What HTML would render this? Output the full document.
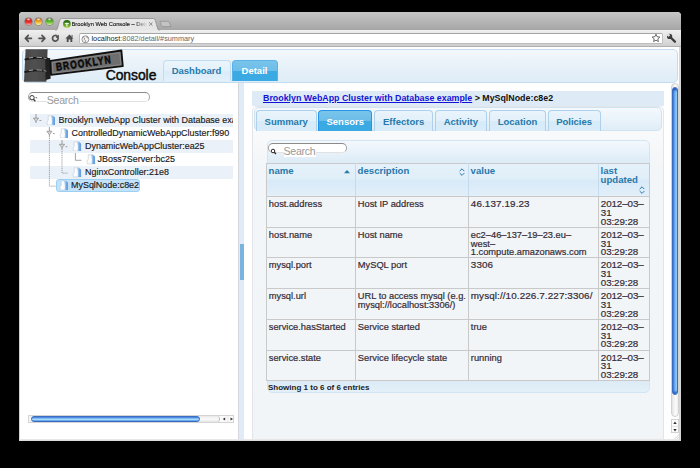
<!DOCTYPE html>
<html><head><meta charset="utf-8">
<style>
*{margin:0;padding:0;box-sizing:border-box}
html,body{width:700px;height:468px;overflow:hidden;background:#000;font-family:"Liberation Sans",sans-serif;position:relative}
.a{position:absolute}
.light{width:7px;height:7px;border-radius:50%;top:17.8px;box-shadow:0 0 0 0.5px rgba(60,20,10,0.45)}
/* header */
.tabd{border:1px solid #aed0ea;border-bottom:0;border-radius:4px 4px 0 0;background:linear-gradient(#e9f4fb 0%,#e3f0fa 50%,#d7ebf9 50%,#d7ebf9 100%);color:#2779aa;font-weight:bold;text-align:center}
.taba{border:1px solid #2694e8;border-bottom:0;border-radius:4px 4px 0 0;background:linear-gradient(#79c4ea 0%,#6bbde8 50%,#3baae3 50%,#3baae3 100%);color:#fff;font-weight:bold;text-align:center}
.tree div{position:absolute;height:13.1px;font-size:8.95px;line-height:13.1px;color:#1a1a1a;white-space:nowrap;-webkit-text-stroke:0.15px #1a1a1a}

.dt{border-collapse:collapse;table-layout:fixed;font-size:9.3px;color:#362b36;-webkit-text-stroke:0.2px #362b36}
.dt span.n{font-size:9.9px;letter-spacing:0.1px;position:relative;top:-0.2px}
.dt td.n{letter-spacing:-0.1px;font-size:9.8px}
.dt td{border:1px solid #c9c9c9;background:#f1f5f8;vertical-align:top;padding:3px 2px 0 1.8px;height:30.7px;line-height:8.8px;white-space:nowrap;overflow:hidden}
.dt th{border:1px solid #c9c9c9;border-top:1px solid #c9c9c9;background:linear-gradient(#e5f1fa 0,#e0eef9 16.5px,#d7e9f7 16.5px,#e2effa 100%);vertical-align:top;text-align:left;padding:3.4px 2px 0 1.6px;height:33.3px;font-size:9.6px;line-height:8.5px;color:#2779aa;font-weight:bold;position:relative;-webkit-text-stroke:0;border-left-color:#c5dcee;border-right-color:#c5dcee}
.dt i{position:absolute;right:4px;top:5px;width:6px;height:8px}
.dt i.up{border-left:2.9px solid transparent;border-right:2.9px solid transparent;border-bottom:3.2px solid #2779aa;width:0;height:0;top:6.2px;right:5px}
.dt th:first-child{border-left-color:#c9c9c9}
.dt th:last-child{border-right-color:#c9c9c9}
.dt svg.up{position:absolute;right:3.8px;top:5px}
.dt svg.ud{position:absolute;right:3.2px;top:3.9px}
.dt svg.ud.b{top:22.5px;right:4.5px}
</style></head><body>
<!-- window frame -->
<div class="a" style="left:19px;top:12px;width:661.6px;height:428px;background:#fff;border-radius:4px 4px 0 0;overflow:hidden">
  <div class="a" style="left:0;top:0;width:662px;height:18px;background:linear-gradient(#c6c6c6,#a6a6a6)"></div>
  <div class="a" style="left:0;top:17.5px;width:662px;height:17.5px;background:linear-gradient(#efefef,#dedede 60%,#cfcfcf);border-bottom:1px solid #b0b0b0"></div>
</div>
<!-- traffic lights -->
<div class="a light" style="left:25.1px;background:radial-gradient(ellipse 35% 22% at 50% 18%,rgba(255,255,255,0.95),rgba(255,255,255,0) 100%),linear-gradient(#8e140e,#dc2018 35%,#ee3a36 65%,#ffaaa4)"></div>
<div class="a light" style="left:35.3px;background:radial-gradient(ellipse 35% 22% at 50% 18%,rgba(255,255,255,0.95),rgba(255,255,255,0) 100%),linear-gradient(#8a4a08,#e08a18 35%,#f4c040 65%,#fff0a0)"></div>
<div class="a light" style="left:45.8px;background:radial-gradient(ellipse 35% 22% at 50% 18%,rgba(255,255,255,0.95),rgba(255,255,255,0) 100%),linear-gradient(#1e5a0c,#4aa020 35%,#78c83e 65%,#c8f0a0)"></div>
<!-- chrome tab -->
<svg class="a" style="left:50px;top:17px" width="130" height="14" viewBox="0 0 130 14">
  <path d="M5.5 13.5 C8.5 13.5 8.5 1.5 11.5 1.5 L103.5 1.5 C106.5 1.5 106.5 13.5 109.5 13.5" fill="#e6e6e6" stroke="#8a8a8a" stroke-width="0.8"/>
  <path d="M109.8 4.3 L118.4 4.3 C119.4 4.3 120.6 9.6 121 9.6 L112.4 9.6 C111.4 9.6 110.6 4.3 109.8 4.3Z" fill="#c4c4c4" stroke="#8e8e8e" stroke-width="0.7"/>
</svg>
<svg class="a" style="left:62.6px;top:19.9px" width="8" height="8" viewBox="0 0 8 8"><defs><linearGradient id="fav" x1="0" x2="0" y1="0" y2="1"><stop offset="0" stop-color="#1a620e"/><stop offset="0.5" stop-color="#4f9620"/><stop offset="1" stop-color="#a8cc38"/></linearGradient></defs><circle cx="3.9" cy="3.9" r="3.85" fill="url(#fav)"/><path d="M1.6 3.6 Q3.9 1.9 6.2 3.6 L5.6 4.3 Q5 4 4.5 4.1 V6.5 H3.3 V4.1 Q2.8 4 2.2 4.3Z" fill="#f4f8ee"/></svg>
<div class="a" style="left:71.5px;top:20px;font-size:5.75px;line-height:8px;color:#1c1c1c;white-space:nowrap;width:77px;overflow:hidden;-webkit-mask-image:linear-gradient(90deg,#000 80%,transparent 98%);-webkit-text-stroke:0.15px #1c1c1c">Brooklyn Web Console – Detail</div>
<svg class="a" style="left:148px;top:21.2px" width="6" height="6" viewBox="0 0 6 6"><path d="M1.1 1.3 L4.5 4.7 M4.5 1.3 L1.1 4.7" stroke="#8c8c8c" stroke-width="1"/></svg>
<!-- toolbar icons -->
<svg class="a" style="left:22px;top:32px" width="60" height="12" viewBox="0 0 60 12">
  <g fill="none" stroke="#525252" stroke-width="1.7" stroke-linecap="round" stroke-linejoin="round">
    <path d="M3.6 6.3 H9.4 M6.3 3.3 L3.4 6.3 L6.3 9.3"/>
    <path d="M17 6.3 H22.8 M20 3.3 L22.9 6.3 L20 9.3"/>
    <path d="M35.3 4.3 A2.8 2.8 0 1 0 36.1 6.6"/>
  </g>
  <path d="M36.9 2.4 L36.9 5.9 L33.6 5.9 Z" fill="#525252"/>
  <path d="M47.5 2.6 L51.6 6.6 L50.3 6.6 L50.3 9.9 L48.4 9.9 L48.4 7.6 L46.6 7.6 L46.6 9.9 L44.7 9.9 L44.7 6.6 L43.4 6.6 Z M49.6 3 H50.6 V5 L49.6 4Z" fill="#4e4e4e"/>
</svg>
<div class="a" style="left:78.5px;top:32.8px;width:584.5px;height:11.2px;background:#fff;border:1px solid #bdbdbd;border-top-color:#a5a5a5;border-radius:2px"></div>
<svg class="a" style="left:80.5px;top:35px" width="9" height="9" viewBox="0 0 9 9"><circle cx="4.4" cy="4.3" r="3.5" fill="#f4f4f4" stroke="#8a8a8a" stroke-width="0.9"/><path d="M2.2 2.2 L3.6 3 L3.2 4.6 L4.6 5.6 L4.2 7.6 M5.4 1.2 L6 2.6 L7.4 3.2" stroke="#8a8a8a" stroke-width="0.8" fill="none"/></svg>
<div class="a" style="left:91.5px;top:33.5px;font-size:7.3px;line-height:10px;color:#666;white-space:nowrap"><span style="color:#222">localhost</span>:8082/detail/#summary</div>
<svg class="a" style="left:650px;top:32px" width="12" height="12" viewBox="0 0 12 12"><path d="M6.00 2.20 L7.12 4.76 L9.90 5.03 L7.81 6.89 L8.41 9.62 L6.00 8.20 L3.59 9.62 L4.19 6.89 L2.10 5.03 L4.88 4.76Z" fill="#fff" stroke="#6a6a6a" stroke-width="1" stroke-linejoin="round"/></svg>
<svg class="a" style="left:664px;top:32px" width="14" height="13" viewBox="0 0 14 13"><path d="M6.2 5 L10.9 9.6" stroke="#3c3c3c" stroke-width="2.3" stroke-linecap="round"/><circle cx="5.6" cy="4.4" r="2.6" fill="#3c3c3c"/><path d="M2.2 3.2 L4.3 1 L6.3 3.2 L4.6 4.8Z" fill="#dedede"/></svg>
<!-- CONTENT -->
<div class="a" style="left:20px;top:47px;width:659px;height:393px;background:#fff"></div>
<!-- header box -->
<div class="a" style="left:22px;top:48.6px;width:656px;height:34px;border:1px solid #c4dcee;border-radius:5px;background:linear-gradient(#f3f8fc,#e6f0f8 60%,#deedf7)"></div>
<!-- logo -->
<svg class="a" style="left:20px;top:46px" width="110" height="40" viewBox="20 46 110 40">
  <defs><linearGradient id="pg" x1="0" x2="1" y1="0" y2="0"><stop offset="0" stop-color="#484848"/><stop offset="0.45" stop-color="#505050"/><stop offset="1" stop-color="#444"/></linearGradient></defs>
  <path d="M25.6 49.2 L47.6 49.2 L46.4 81.8 L24 81.8 Z" fill="url(#pg)"/>
  <path d="M45.2 57.2 L50.2 58.2 L50.6 78.8 L45.6 80 Z" fill="#202020"/>
  <path d="M24.6 59.6 Q36 56.4 48 58.8" fill="none" stroke="#1a1a1a" stroke-width="1.8"/>
  <path d="M29 58 L33 57.4 M36.5 57.2 L42 57.6 M43.5 58 L46.5 58.6" fill="none" stroke="#c4c4c4" stroke-width="0.8"/>
  <path d="M24.4 72.2 Q36 69 47.6 71.4" fill="none" stroke="#1a1a1a" stroke-width="1.8"/>
  <path d="M29 70.6 L33 70 M36.5 69.8 L42 70.2 M43.5 70.6 L46.5 71.2" fill="none" stroke="#c4c4c4" stroke-width="0.8"/>
  <path d="M50.4 60.9 L121.4 50.5 L122.8 66.2 L51 74.8 Z" fill="#6e6e6e" stroke="#111" stroke-width="1.8" stroke-linejoin="round"/>
  <path d="M52.4 62.5 L119.8 52.6 L120.9 64.6 L52.9 73.1 Z" fill="none" stroke="#959595" stroke-width="0.6"/>
  <g transform="rotate(-8 56.5 70.8)"><text x="0" y="0" transform="translate(56.5 70.8) scale(0.8 1.04)" font-family="Liberation Sans" font-weight="bold" font-size="10.6" fill="#0a0a0a" stroke="#0a0a0a" stroke-width="0.55" letter-spacing="1.3">BROOKLYN</text></g>
</svg>
<div class="a" style="left:105.7px;top:66.5px;font-size:13.9px;line-height:16px;color:#0a0a0a;white-space:nowrap;-webkit-text-stroke:0.45px #0a0a0a;letter-spacing:-0.05px">Console</div>
<!-- main tabs -->
<div class="a tabd" style="left:162.5px;top:60.2px;width:68px;height:21.3px;font-size:9.5px;line-height:19.4px;border-color:#c2dbef;background:linear-gradient(#eaf4fc 0%,#e4f1fb 50%,#d9ecf9 50%,#e2f0fa 100%)">Dashboard</div>
<div class="a taba" style="left:231.5px;top:60.2px;width:46px;height:21.3px;font-size:9.5px;line-height:19.4px;border-color:#5ab0e8">Detail</div>


<!-- left panel -->
<div class="a" style="left:28px;top:92.2px;width:122px;height:10.3px;border:1px solid #a0a0a0;border-top-color:#8a8a8a;border-bottom-color:#e2e2e2;border-radius:6px;background:#fff"></div>
<svg class="a" style="left:28px;top:94px" width="10" height="9" viewBox="0 0 10 9"><circle cx="4" cy="3.7" r="2.2" fill="none" stroke="#3a3a3a" stroke-width="1"/><path d="M5.5 5.3 L7.3 7.2" stroke="#3a3a3a" stroke-width="1.3"/><path d="M7.2 3.3 L9.4 3.3 L8.3 4.6Z" fill="#555"/></svg>
<div class="a" style="left:46.8px;top:93.5px;font-size:10.6px;line-height:12px;color:#999;letter-spacing:-0.3px;background:#fff;padding:0 1px 0 0">Search</div>

<div class="tree">
 <div style="left:30px;top:113.5px;width:203px;background:#ebf1f9"></div>
 <div style="left:30px;top:139.7px;width:203px;background:#ebf1f9"></div>
 <div style="left:30px;top:165.9px;width:203px;background:#ebf1f9"></div>
 <div style="left:56.2px;top:179.3px;width:83.6px;height:12.6px;background:#c2e2fa;border:1px solid #9ccff4;border-radius:3px"></div>
 <div style="left:58.5px;top:113.5px;width:174.5px;overflow:hidden;">Brooklyn WebApp Cluster with Database example</div>
 <div style="left:71.5px;top:126.6px;">ControlledDynamicWebAppCluster:f990</div>
 <div style="left:85px;top:139.7px;">DynamicWebAppCluster:ea25</div>
 <div style="left:97.5px;top:152.8px;">JBoss7Server:bc25</div>
 <div style="left:85px;top:165.9px;">NginxController:21e8</div>
 <div style="left:71px;top:179.0px;">MySqlNode:c8e2</div>
</div>
<svg class="a" style="left:20px;top:110px" width="100" height="90" viewBox="20 110 100 90">
  <g stroke="#9a9a9a" stroke-width="0.9" fill="none" stroke-dasharray="1.2 0.7">
    <path d="M49.4 136 V186.2 H55.5"/>
    <path d="M62 149 V173.1 H67.8"/>
  </g>
  <g stroke="#9a9a9a" stroke-width="0.9" fill="none">
    <path d="M75.4 153 V160.3 H81.5"/>
  </g>
<path d="M36 114.0 V118.0 M36 121.5 V123.0" stroke="#8e8e8e" stroke-width="0.9"/><path d="M33.4 118.1 H38.6 L36 121.7Z" fill="#d6d6d6" stroke="#8a8a8a" stroke-width="0.7" stroke-linejoin="round"/><path d="M39.4 120.5 H41.4" stroke="#8e8e8e" stroke-width="0.8"/><path d="M49.4 127.1 V131.1 M49.4 134.6 V136.1" stroke="#8e8e8e" stroke-width="0.9"/><path d="M46.8 131.2 H52.0 L49.4 134.79999999999998Z" fill="#d6d6d6" stroke="#8a8a8a" stroke-width="0.7" stroke-linejoin="round"/><path d="M52.8 133.6 H54.8" stroke="#8e8e8e" stroke-width="0.8"/><path d="M62 140.2 V144.2 M62 147.7 V149.2" stroke="#8e8e8e" stroke-width="0.9"/><path d="M59.4 144.29999999999998 H64.6 L62 147.89999999999998Z" fill="#d6d6d6" stroke="#8a8a8a" stroke-width="0.7" stroke-linejoin="round"/><path d="M65.4 146.7 H67.4" stroke="#8e8e8e" stroke-width="0.8"/>
</svg>
<svg class="a" style="left:45.5px;top:114.7px" width="9.5" height="10.5" viewBox="0 0 9.5 10.5"><defs><linearGradient id="fg0" x1="0" x2="1"><stop offset="0" stop-color="#d4e6f8"/><stop offset="0.5" stop-color="#8dbdec"/><stop offset="1" stop-color="#3f86d6"/></linearGradient></defs><path d="M2.2 0.8 H6.8 L8.8 2.6 V10 H1.6 C0.8 8 0.8 6 2.2 5.5 Z" fill="#fbfcfd" stroke="#c2c9d0" stroke-width="0.6"/><path d="M4.6 0.8 H6.8 L8.8 2.6 V10 H5.4 C6.2 7 6 3.5 4.6 0.8Z" fill="url(#fg0)"/></svg>
<svg class="a" style="left:58.6px;top:127.8px" width="9.5" height="10.5" viewBox="0 0 9.5 10.5"><defs><linearGradient id="fg1" x1="0" x2="1"><stop offset="0" stop-color="#d4e6f8"/><stop offset="0.5" stop-color="#8dbdec"/><stop offset="1" stop-color="#3f86d6"/></linearGradient></defs><path d="M2.2 0.8 H6.8 L8.8 2.6 V10 H1.6 C0.8 8 0.8 6 2.2 5.5 Z" fill="#fbfcfd" stroke="#c2c9d0" stroke-width="0.6"/><path d="M4.6 0.8 H6.8 L8.8 2.6 V10 H5.4 C6.2 7 6 3.5 4.6 0.8Z" fill="url(#fg1)"/></svg>
<svg class="a" style="left:72px;top:140.9px" width="9.5" height="10.5" viewBox="0 0 9.5 10.5"><defs><linearGradient id="fg2" x1="0" x2="1"><stop offset="0" stop-color="#d4e6f8"/><stop offset="0.5" stop-color="#8dbdec"/><stop offset="1" stop-color="#3f86d6"/></linearGradient></defs><path d="M2.2 0.8 H6.8 L8.8 2.6 V10 H1.6 C0.8 8 0.8 6 2.2 5.5 Z" fill="#fbfcfd" stroke="#c2c9d0" stroke-width="0.6"/><path d="M4.6 0.8 H6.8 L8.8 2.6 V10 H5.4 C6.2 7 6 3.5 4.6 0.8Z" fill="url(#fg2)"/></svg>
<svg class="a" style="left:86px;top:154.0px" width="9.5" height="10.5" viewBox="0 0 9.5 10.5"><defs><linearGradient id="fg3" x1="0" x2="1"><stop offset="0" stop-color="#d4e6f8"/><stop offset="0.5" stop-color="#8dbdec"/><stop offset="1" stop-color="#3f86d6"/></linearGradient></defs><path d="M2.2 0.8 H6.8 L8.8 2.6 V10 H1.6 C0.8 8 0.8 6 2.2 5.5 Z" fill="#fbfcfd" stroke="#c2c9d0" stroke-width="0.6"/><path d="M4.6 0.8 H6.8 L8.8 2.6 V10 H5.4 C6.2 7 6 3.5 4.6 0.8Z" fill="url(#fg3)"/></svg>
<svg class="a" style="left:72px;top:167.1px" width="9.5" height="10.5" viewBox="0 0 9.5 10.5"><defs><linearGradient id="fg4" x1="0" x2="1"><stop offset="0" stop-color="#d4e6f8"/><stop offset="0.5" stop-color="#8dbdec"/><stop offset="1" stop-color="#3f86d6"/></linearGradient></defs><path d="M2.2 0.8 H6.8 L8.8 2.6 V10 H1.6 C0.8 8 0.8 6 2.2 5.5 Z" fill="#fbfcfd" stroke="#c2c9d0" stroke-width="0.6"/><path d="M4.6 0.8 H6.8 L8.8 2.6 V10 H5.4 C6.2 7 6 3.5 4.6 0.8Z" fill="url(#fg4)"/></svg>
<svg class="a" style="left:59px;top:180.2px" width="9.5" height="10.5" viewBox="0 0 9.5 10.5"><defs><linearGradient id="fg5" x1="0" x2="1"><stop offset="0" stop-color="#d4e6f8"/><stop offset="0.5" stop-color="#8dbdec"/><stop offset="1" stop-color="#3f86d6"/></linearGradient></defs><path d="M2.2 0.8 H6.8 L8.8 2.6 V10 H1.6 C0.8 8 0.8 6 2.2 5.5 Z" fill="#fbfcfd" stroke="#c2c9d0" stroke-width="0.6"/><path d="M4.6 0.8 H6.8 L8.8 2.6 V10 H5.4 C6.2 7 6 3.5 4.6 0.8Z" fill="url(#fg5)"/></svg>

<!-- left h scrollbar -->
<div class="a" style="left:28.2px;top:415px;width:206.3px;height:7.6px;border:1px solid #d4d4d4;background:#fbfbfb"></div>
<div class="a" style="left:29px;top:415.5px;width:190.5px;height:6.8px;border-radius:4px;background:linear-gradient(#e8e8e8,#fafafa 50%,#e6e6e6);border-right:1px solid #bdbdbd"></div>
<div class="a" style="left:30.9px;top:415.5px;width:169.6px;height:6.8px;border-radius:4px;border:0.5px solid #3a6cc4;background:linear-gradient(#3f74d0,#5d9be6 22%,#8cc8f8 45%,#ade0fd 60%,#7dbdf5 80%,#4a84da)"></div>
<svg class="a" style="left:219.5px;top:415px" width="15" height="8" viewBox="0 0 15 8"><path d="M5.2 2.5 V5.5 L2.7 4Z" fill="#333"/><path d="M8 0.5 V7.5" stroke="#d8d8d8" stroke-width="0.6"/><path d="M10.5 2.5 V5.5 L13 4Z" fill="#333"/></svg>

<!-- splitter -->
<div class="a" style="left:238px;top:83px;width:6.5px;height:357px;background:#dfebf6;border-left:1px solid #d4d8dc;border-right:0.5px solid #dce7f1"></div>
<div class="a" style="left:239.7px;top:243.7px;width:4.3px;height:36px;background:#7ab3de"></div>

<!-- right panel -->
<div class="a" style="left:244px;top:83px;width:427px;height:357px;background:#fff"></div>
<div class="a" style="left:251.7px;top:106px;width:412px;height:340px;border:1px solid #e3e5e8;border-radius:5px;background:linear-gradient(#fbfcfd 0px,#f3f6f8 60px,#f2f5f7 100%)"></div>
<div class="a" style="left:252px;top:90.8px;width:412px;height:15px;background:#deebf6;font-size:8.85px;line-height:14.5px;font-weight:bold;color:#111;padding-left:11px;white-space:nowrap"><span style="color:#1212d6;text-decoration:underline">Brooklyn WebApp Cluster with Database example</span> &gt; MySqlNode:c8e2</div>
<!-- tabs widget -->
<div class="a" style="left:253.5px;top:106.6px;width:408.5px;height:24.8px;border:1px solid #d0e3f1;border-radius:5px;background:linear-gradient(#f4f9fd,#dfedf7)"></div>
<div class="a tabd" style="left:255.6px;top:110.4px;width:61.3px;height:20.6px;font-size:9.5px;line-height:21.8px">Summary</div>
<div class="a taba" style="left:318.3px;top:110.4px;width:53.9px;height:20.6px;font-size:9.5px;line-height:21.8px">Sensors</div>
<div class="a tabd" style="left:374.3px;top:110.4px;width:58.6px;height:20.6px;font-size:9.5px;line-height:21.8px">Effectors</div>
<div class="a tabd" style="left:434.7px;top:110.4px;width:52.3px;height:20.6px;font-size:9.5px;line-height:21.8px">Activity</div>
<div class="a tabd" style="left:489.4px;top:110.4px;width:56.3px;height:20.6px;font-size:9.5px;line-height:21.8px">Location</div>
<div class="a tabd" style="left:547.7px;top:110.4px;width:52.9px;height:20.6px;font-size:9.5px;line-height:21.8px">Policies</div>
<!-- table container -->
<div class="a" style="left:266.5px;top:140px;width:383px;height:252.5px;border:1px solid #d3e5f3;border-radius:5px;background:linear-gradient(#f3f8fd 0px,#e8f2fa 11px,#dcebf6 22px,#dcebf6 240px,#e4f0f9 252px)"></div>
<div class="a" style="left:268.4px;top:143.2px;width:78.4px;height:10.3px;border:1px solid #a0a0a0;border-top-color:#8a8a8a;border-bottom-color:#e2e2e2;border-radius:6px;background:#fff"></div>
<svg class="a" style="left:269.5px;top:147.5px" width="8" height="8" viewBox="0 0 8 8"><circle cx="3" cy="3" r="1.8" fill="none" stroke="#2a2a2a" stroke-width="1"/><path d="M4.3 4.3 L6 6" stroke="#2a2a2a" stroke-width="1.3"/></svg>
<div class="a" style="left:283.6px;top:144.5px;font-size:10.6px;line-height:12px;color:#999;letter-spacing:-0.3px;background:#fff;padding:0 1px 0 0">Search</div>
<table class="a dt" style="left:266px;top:162.8px;width:383px">
<colgroup><col style="width:89px"><col style="width:113px"><col style="width:130px"><col style="width:51px"></colgroup>
<tr class="h"><th>name<svg class="up" width="8" height="5" viewBox="0 0 8 5"><path d="M1 4.2 L4 1 L7 4.2Z" fill="#2779aa"/></svg></th><th>description<svg class="ud" width="6" height="8" viewBox="0 0 6 8"><path d="M0.7 3.1 L3 0.8 L5.3 3.1 M0.7 5.1 L3 7.4 L5.3 5.1" fill="none" stroke="#2779aa" stroke-width="1"/></svg></th><th>value</th><th>last updated<svg class="ud b" width="6" height="8" viewBox="0 0 6 8"><path d="M0.7 3.1 L3 0.8 L5.3 3.1 M0.7 5.1 L3 7.4 L5.3 5.1" fill="none" stroke="#2779aa" stroke-width="1"/></svg></th></tr>
<tr><td>host.address</td><td>Host IP address</td><td><span class="n">46.137.19.23</span></td><td class="n">2012–03–<br>31<br>03:29:28</td></tr>
<tr><td>host.name</td><td>Host name</td><td>ec2–46–137–19–23.eu–<br>west–<br>1.compute.amazonaws.com</td><td class="n">2012–03–<br>31<br>03:29:28</td></tr>
<tr><td>mysql.port</td><td>MySQL port</td><td><span class="n">3306</span></td><td class="n">2012–03–<br>31<br>03:29:28</td></tr>
<tr><td>mysql.url</td><td>URL to access mysql (e.g.<br>mysql://localhost:3306/)</td><td><span class="n">mysql://10.226.7.227:3306/</span></td><td class="n">2012–03–<br>31<br>03:29:28</td></tr>
<tr><td>service.hasStarted</td><td>Service started</td><td>true</td><td class="n">2012–03–<br>31<br>03:29:28</td></tr>
<tr><td>service.state</td><td>Service lifecycle state</td><td>running</td><td class="n">2012–03–<br>31<br>03:29:28</td></tr>
</table>
<div class="a" style="left:268px;top:382px;font-size:8px;line-height:11px;font-weight:bold;color:#222">Showing 1 to 6 of 6 entries</div>

<!-- vertical scrollbar -->
<div class="a" style="left:671px;top:83px;width:8px;height:357px;background:#fff"></div>
<div class="a" style="left:671.2px;top:83.4px;width:7.7px;height:334px;border:1px solid #d2d2d2;border-radius:4px;background:linear-gradient(90deg,#e4e4e4,#fbfbfb 60%,#efefef)"></div>
<div class="a" style="left:671.9px;top:86.5px;width:6.4px;height:308px;border-radius:3.5px;border:0.5px solid #3a6cc4;background:linear-gradient(90deg,#4277d2,#5a98e6 25%,#6cadf0 50%,#86c9fa 75%,#98d6fb 88%,#6aa6ea);box-shadow:inset 0 3px 2px -1px #1f4fae,inset 0 -3px 2px -1px #2a5fc0"></div>
<div class="a" style="left:671.2px;top:418.5px;width:7.7px;height:14.5px;border:1px solid #d2d2d2;background:#fafafa"></div>
<svg class="a" style="left:671.2px;top:418.5px" width="8" height="15" viewBox="0 0 8 15"><path d="M2.3 5 H5.7 L4 2.5Z M2.3 10 H5.7 L4 12.5Z" fill="#333"/><path d="M0.5 7.5 H7.5" stroke="#d8d8d8" stroke-width="0.6"/></svg>
<svg class="a" style="left:671px;top:432px" width="9" height="8" viewBox="0 0 9 8"><path d="M8.5 2 L3 7.5 M8.5 4.5 L5.5 7.5 M8.5 6.5 L7 8" stroke="#b0b0b0" stroke-width="0.6"/></svg>
<div class="a" style="left:0;top:441px;width:700px;height:27px;background:#000;z-index:50"></div>
<div class="a" style="left:19px;top:47px;width:1.2px;height:393px;background:#cfcfcf;z-index:49"></div>
<div class="a" style="left:19px;top:439px;width:662px;height:2px;background:linear-gradient(#ececec,#d8d8d8);z-index:49"></div>
<div class="a" style="left:679.2px;top:47px;width:1.5px;height:394px;background:#d6d6d6;z-index:49"></div>
<div class="a" style="left:680.6px;top:0;width:20px;height:468px;background:#000;z-index:50"></div>
</body></html>
